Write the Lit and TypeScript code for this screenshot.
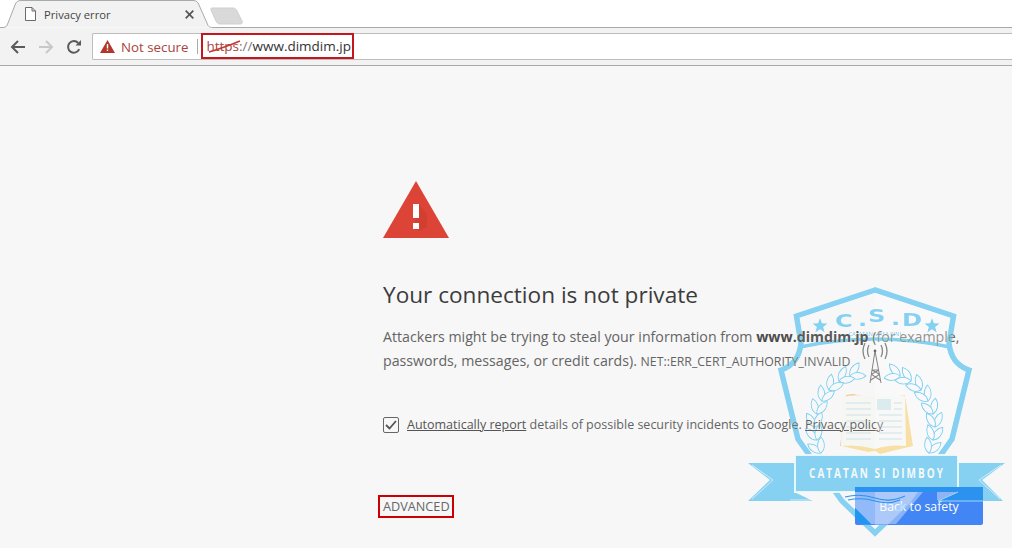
import { LitElement, html, css, svg } from "lit";
import { customElement } from "lit/decorators.js";

@customElement("app-root")
export class AppRoot extends LitElement {
  static styles = css`
    :host { display: block; width: 1012px; height: 548px; position: relative; overflow: hidden; background: #f7f7f7; font-family: "Open Sans", "Noto Sans", sans-serif; color: #646464; }
    .strip { height: 28px; background: #fff; display: flex; align-items: flex-end; position: relative; }
    .strip-line { position: absolute; left: 212px; right: 0; bottom: 0; height: 1px; background: #a9a9a9; }
    .tab-shape { position: absolute; left: 0; top: 0; }
    .tab { position: relative; width: 209px; height: 28px; display: flex; align-items: center; padding: 0 0 0 25px; box-sizing: border-box; gap: 8px; font-size: 11.2px; color: #444; }
    .tab .title { flex: 1; }
    .tab .close { margin-right: 15px; display: flex; }
    .newtab { position: relative; align-self: flex-start; margin-top: 7px; }
    .toolbar { height: 37px; background: #f2f2f2; border-bottom: 1px solid #a8a8a8; display: flex; align-items: center; padding: 0 0 0 10px; gap: 12px; box-sizing: content-box; }
    .nav { display: flex; width: 16px; height: 16px; }
    .omni { margin-left: -2px; flex: 1; background: #fff; border: 1px solid #bdbdbd; border-right: none; border-radius: 2px 0 0 2px; display: flex; align-items: center; box-sizing: content-box; height: 25px; }
    .secure { display: flex; align-items: center; gap: 6px; padding-left: 7px; color: #a9443b; font-size: 13.3px; }
    .sep { width: 1px; height: 15px; background: #aaa; margin: 0 3px 0 9px; }
    .url { position: relative; border: 2px solid #c4161c; height: 26px; width: 153px; box-sizing: border-box; display: flex; align-items: center; padding-left: 3px; font-size: 13.5px; color: #333; white-space: nowrap; align-self: flex-start; margin-top: -1px; }
    .url .scheme { color: #a9443b; }
    .url .slash { color: #777; }
    .strike { position: absolute; left: 2px; top: 2px; }
    .page { height: 482px; padding: 115px 0 0 383px; box-sizing: border-box; }
    .icon { display: block; width: 66px; height: 57px; }
    h1 { margin: 41px 0 0; font-size: 22.6px; line-height: 32px; font-weight: 400; color: #3c3c3c; }
    p { margin: 14px 0 0; font-size: 14.2px; line-height: 24px; width: 600px; }
    p b { color: #4c4c4c; font-weight: 700; }
    p .code { font-size: 12.3px; }
    .report { margin-top: 41px; display: flex; align-items: center; gap: 8px; font-size: 12.5px; line-height: 20px; }
    .cb { width: 16px; height: 16px; box-sizing: border-box; border: 1px solid #666; border-radius: 2px; display: flex; align-items: center; justify-content: center; }
    .report u { color: #555; }
    .actions { display: flex; align-items: center; justify-content: space-between; margin: 53px 29px 0 -5px; }
    .advanced { border: 2px solid #cc0000; height: 23px; box-sizing: border-box; padding: 0 2px 0 3px; display: flex; align-items: center; font-size: 12.7px; color: #666; width: 76px; white-space: nowrap; margin-top: -1px; }
    .primary { width: 128px; height: 37px; background: #4285f4; border: none; border-radius: 2px; color: #fff; font-family: inherit; font-size: 12.3px; font-weight: 400; padding: 0; }
    .mark { position: absolute; left: 740px; top: 280px; pointer-events: none; }
    .mark.darken { mix-blend-mode: darken; }
    .mark text { font-family: "DejaVu Sans", sans-serif; }
    .mark .thin { font-family: "Open Sans", sans-serif; }
  `;

  private markBase() {
    return svg`<svg class="mark" width="272" height="268" viewBox="740 280 272 268">
      <path d="M875 287 V537 L840 503 L795 440 L777 368 Q796 362 798 343 L793 314 Z" fill="#fff" fill-opacity=".08"/>
      <path d="M875 287 V537 L910 503 L955 440 L973 368 Q954 362 952 343 L957 314 Z" fill="#fff" fill-opacity=".3"/>
    </svg>`;
  }

  private mark() {
    const blue = "#86d0f2";
    const spine: [number, number][] = [[25, 376], [36, 381], [46, 390], [53, 401], [58, 414], [60, 427], [58, 440], [54, 453], [48, 462]];
    const laurel = (dir: number) =>
      spine.slice(0, -1).map(([dx, y], i) => {
        const prev = spine[Math.max(i - 1, 0)];
        const next = spine[i + 1];
        const ang = (Math.atan2(prev[1] - next[1], dir * (prev[0] - next[0])) * 180) / Math.PI;
        const x = 875 + dir * dx;
        const leaf = (a: number) => svg`<path transform="translate(${x} ${y}) rotate(${ang + a})" d="M0 0 C4 -5 11 -5 16 -1 C11 4 4 4 0 0 Z" fill="#fff" stroke="${blue}" stroke-width="1"/>`;
        return svg`${leaf(dir * 28)}${leaf(dir * -28)}`;
      });
    const star = (x: number, y: number, r: number) =>
      svg`<polygon fill="${blue}" points="${[0, 1, 2, 3, 4, 5, 6, 7, 8, 9].map((i) => { const a = -Math.PI / 2 + (i * Math.PI) / 5; const q = i % 2 ? r * 0.42 : r; return `${x + q * Math.cos(a)},${y + q * Math.sin(a)}`; }).join(" ")}"/>`;
    return svg`<svg class="mark darken" width="272" height="268" viewBox="740 280 272 268">
      <path d="M875 290 L796.5 316 L801 343 Q799 364 781 370 L798 439 L842 501 L875 533 L908 501 L952 439 L969 370 Q951 364 949 343 L953.5 316 Z" fill="#fff" stroke="${blue}" stroke-width="5.5" stroke-linejoin="miter"/>
      <path d="M800 347 Q875 331 950 347" fill="none" stroke="${blue}" stroke-width="3.5"/>
      ${star(820, 326, 8)}${star(932, 326, 8)}
      <g transform="translate(835 0) scale(1.35 1)">
        <text x="0 17 24.4 41.5 49.6" y="327 326 322 325 326" font-size="18" font-weight="700" fill="${blue}">C.S.D</text>
      </g>
      <text class="thin" x="875" y="336" text-anchor="middle" font-size="5.4" font-weight="600" fill="#8fcbe6" textLength="52" lengthAdjust="spacingAndGlyphs">CATATAN MASA KINI</text>
      <g fill="none" stroke="#888" stroke-width="1.1">
        <path d="M875 351 L870 383 M875 351 L881 383 M872.5 370 H878.5 M871 380 L880 374 M880 380 L871 374 M872 374 L879 370 M879 374 L872 370"/>
        <path d="M869 345 Q866 351 869 357 M881 345 Q884 351 881 357 M865 343 Q861 351 865 359 M885 343 Q889 351 885 359" stroke-width="1.4"/>
      </g>
      <circle cx="875" cy="351" r="1.4" fill="#666"/>
      ${laurel(-1)}${laurel(1)}
      <path d="M846 395 L853 394 L875 398 L905 395 L913 446 L880 454 L875 451 L868 452 L841 446 Z" fill="#f8dfa6"/>
      <path d="M846 395 L853 394 L860 396 L842 446 L840 446 Z" fill="#f4c8a0"/>
      <path d="M842 397 Q858 393 875 398 L875 449 Q858 444 841 446 Z" fill="#f6f6f3"/>
      <path d="M875 398 Q892 393 905 396 L906 446 Q890 444 875 449 Z" fill="#f8f8f6"/>
      <rect x="877" y="399" width="14" height="11" fill="#dcebed"/>
      <g stroke="#dce9ed" stroke-width="1.3">
        <path d="M846 403 H871 M846 409 H871 M846 415 H871 M846 421 H871 M846 427 H871 M846 433 H871 M846 439 H871"/>
        <path d="M894 403 H902 M894 409 H902 M879 415 H902 M879 421 H902 M879 427 H902 M879 433 H902 M879 439 H902"/>
      </g>
      <path d="M795 463 H748 L770 480 L748 501 H813 L795 492 Z" fill="${blue}"/>
      <path d="M957 463 H1005 L982 480 L1003 501 H937 L957 492 Z" fill="${blue}"/>
      <path d="M752 465 L773 480 L752 499 M795 492 L813 500 H790" fill="none" stroke="#fff" stroke-opacity=".6"/>
      <path d="M1001 465 L979 480 L1000 499" fill="none" stroke="#fff" stroke-opacity=".6"/>
      <rect x="795" y="455" width="163" height="37" fill="${blue}" stroke="#fff" stroke-opacity=".8" stroke-width="2"/>
      <text class="thin" x="809" y="478" font-size="15" font-weight="700" fill="#fff" fill-opacity=".92" letter-spacing="3" textLength="136" lengthAdjust="spacingAndGlyphs">CATATAN SI DIMBOY</text>
    </svg>`;
  }

  private buttonPatches() {
    return svg`<svg class="mark" width="272" height="268" viewBox="740 280 272 268">
      <path d="M855 492 H923 L896 524 H871 L855 508 Z" fill="#fff" fill-opacity=".38"/>
      <path d="M855 508 L871 524 H862 L855 518 Z" fill="#2196f0"/>
      <path d="M855 487 H983 V501 H937 V492 H855 Z" fill="#2b93ef"/>
      <path d="M937 492 H958 L940 500 H937 Z" fill="#8fb4f6"/>
      <path d="M983 501 H938 L958 492" fill="none" stroke="#9fd6f6" stroke-width="1"/>
      <path d="M845 497 Q860 493 875 498 T905 496 M848 500 Q862 497 875 501 T900 500" fill="none" stroke="#2b93ef" stroke-width="1.1"/>
    </svg>`;
  }

  render() {
    return html`
      <div class="strip">
        <svg class="tab-shape" width="250" height="28" viewBox="0 0 250 28">
          <path d="M0 27.5 H3 C6 27.5 7 26 8 23 L15 5 C16 2 17.5 .5 21 .5 H193 C196.5 .5 198 2 199 5 L207 23 C208 26 209 27.5 213 27.5" fill="#f2f2f2" stroke="#a9a9a9"/>
        </svg>
        <div class="strip-line"></div>
        <div class="tab">
          <svg width="11" height="14" viewBox="0 0 11 14"><path d="M.5 .5 H7 L10.5 4 V13.5 H.5 Z M7 .5 V4 H10.5" fill="#fff" stroke="#6b6b6b"/></svg>
          <span class="title">Privacy error</span>
          <span class="close"><svg width="9" height="9" viewBox="0 0 9 9"><path d="M.7 .7 L8.3 8.3 M8.3 .7 L.7 8.3" stroke="#555" stroke-width="1.7"/></svg></span>
        </div>
        <svg class="newtab" width="36" height="18" viewBox="0 0 36 18"><path d="M3 1 H24 C26 1 27 2 28 4 L33 14 C34 16 33 17 31 17 H11 C9 17 8 16 7 14 L2 3 C1.5 2 2 1 3 1 Z" fill="#d9d9d9" stroke="#cfcfcf"/></svg>
      </div>
      <div class="toolbar">
        <span class="nav"><svg width="16" height="16" viewBox="0 0 16 16"><path d="M15 8 H2 M8 2 L2 8 L8 14" fill="none" stroke="#5a5a5a" stroke-width="2"/></svg></span>
        <span class="nav"><svg width="16" height="16" viewBox="0 0 16 16"><path d="M1 8 H14 M8 2 L14 8 L8 14" fill="none" stroke="#c8c8c8" stroke-width="2"/></svg></span>
        <span class="nav"><svg width="16" height="16" viewBox="0 0 16 16"><path d="M13.2 10.2 A5.8 5.8 0 1 1 12.2 4" fill="none" stroke="#5a5a5a" stroke-width="2"/><path d="M9.5 6.5 H15 V1 Z" fill="#5a5a5a"/></svg></span>
        <div class="omni">
          <span class="secure">
            <svg width="15" height="13" viewBox="0 0 15 13"><path d="M7.5 0 L15 13 H0 Z" fill="#b3362b"/><path d="M6.8 4 H8.2 V8.6 H6.8 Z M6.8 9.6 H8.2 V11 H6.8 Z" fill="#fff"/></svg>
            <span>Not secure</span>
          </span>
          <span class="sep"></span>
          <span class="url"><span class="scheme">https</span><span class="slash">://</span>www.dimdim.jp
            <svg class="strike" width="40" height="16" viewBox="0 0 40 16"><path d="M4 15 Q18 11 35 4" fill="none" stroke="#bf3a32" stroke-width="1.6"/></svg>
          </span>
        </div>
      </div>
      <main class="page">
        <svg class="icon" viewBox="0 0 66 57">
          <path d="M33 0 L66 57 H0 Z" fill="#db4437"/>
          <path d="M36 23 L44 33 V46 L37 50 L30 48 Z" fill="#c53929" fill-opacity=".4"/>
          <path d="M30 23 H36 V37 H30 Z M30 42 H36 V48 H30 Z" fill="#fff"/>
        </svg>
        <h1>Your connection is not private</h1>
        <p>Attackers might be trying to steal your information from <b>www.dimdim.jp</b> (for example, passwords, messages, or credit cards). <span class="code">NET::ERR_CERT_AUTHORITY_INVALID</span></p>
        <div class="report">
          <span class="cb"><svg width="12" height="10" viewBox="0 0 12 10"><path d="M1 5 L4.5 8.5 L11 1" fill="none" stroke="#555" stroke-width="1.8"/></svg></span>
          <span><u>Automatically report</u> details of possible security incidents to Google. <u>Privacy policy</u></span>
        </div>
        <div class="actions">
          <span class="advanced">ADVANCED</span>
          <button class="primary">Back to safety</button>
        </div>
      </main>
      ${this.markBase()}${this.mark()}${this.buttonPatches()}
    `;
  }
}
